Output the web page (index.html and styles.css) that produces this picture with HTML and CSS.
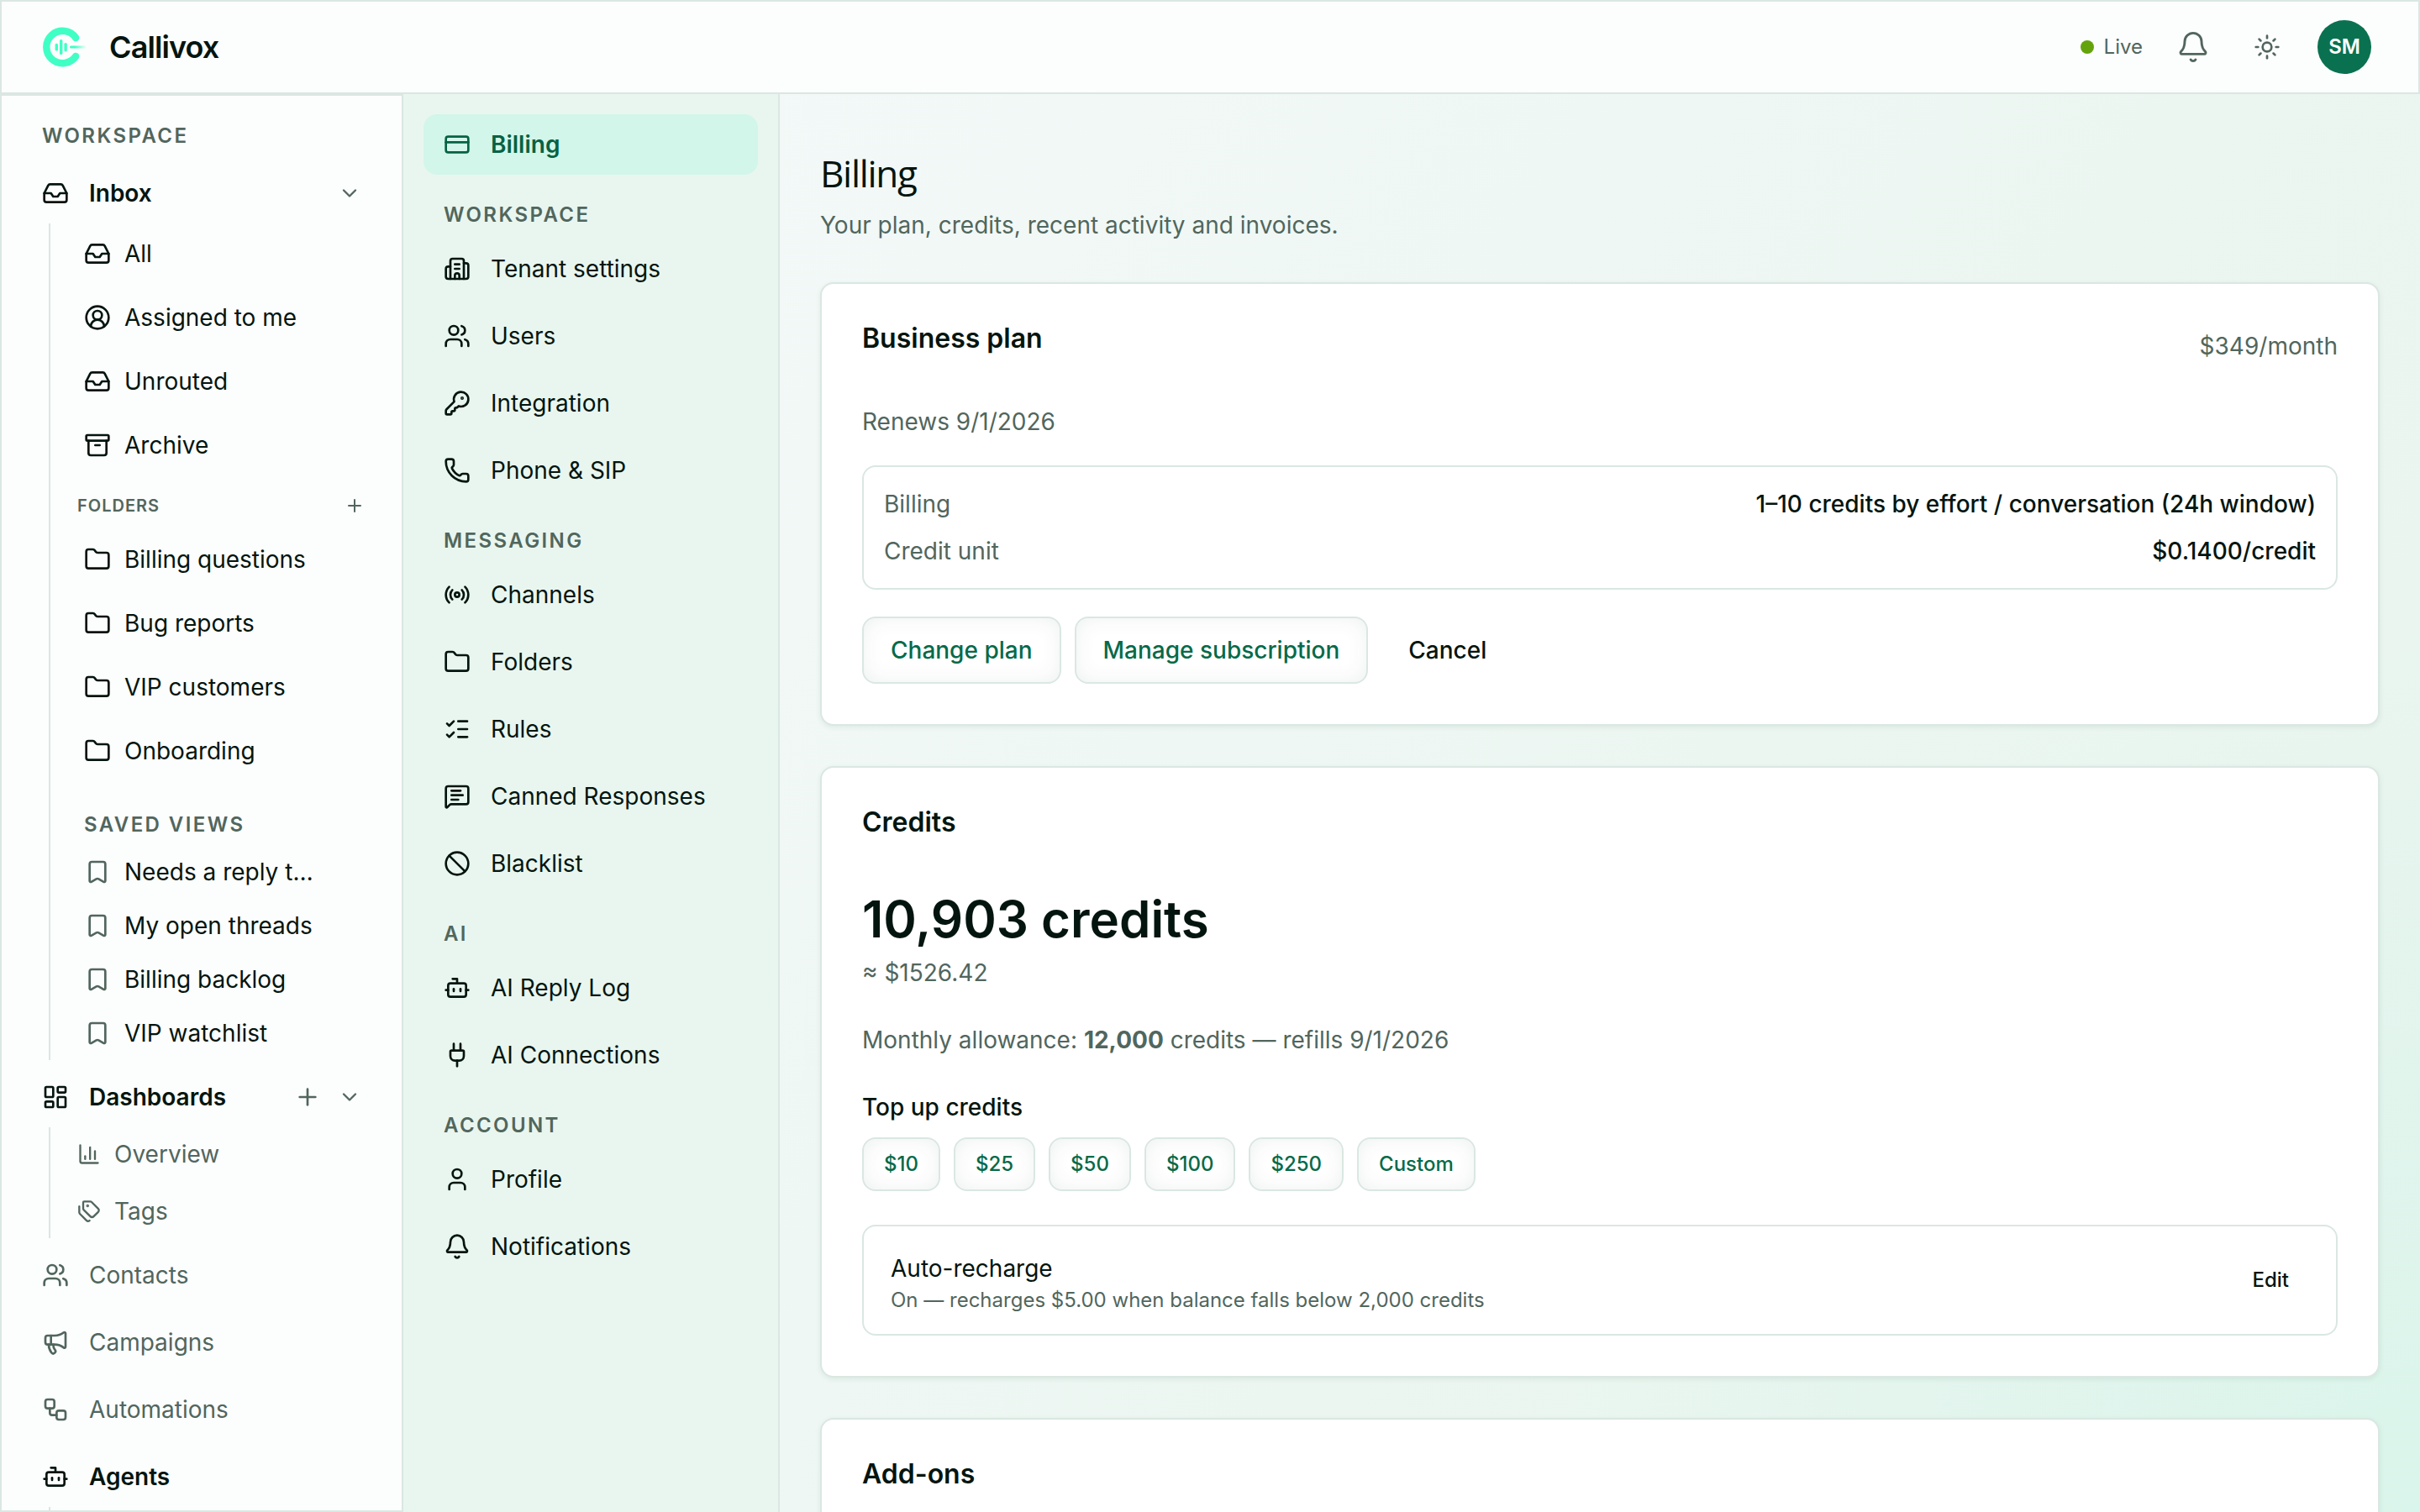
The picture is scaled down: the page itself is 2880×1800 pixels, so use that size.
FILE: index.html
```html
<!DOCTYPE html>
<html lang="en">
	<head>
		<meta charset="UTF-8" />
		<meta name="viewport" content="width=device-width, initial-scale=1.0" />
		<title>Billing - Callivox</title>
		<link rel="stylesheet" href="styles.css">
	</head>
	<body>
		<!-- icon sprite -->
		<svg class="sprite" aria-hidden="true">
			<symbol id="inbox" viewBox="0 0 24 24"><path d="M22 12h-6l-2 3h-4l-2-3H2"/><path d="M5.45 5.11 2 12v6a2 2 0 0 0 2 2h16a2 2 0 0 0 2-2v-6l-3.45-6.89A2 2 0 0 0 16.76 4H7.24a2 2 0 0 0-1.79 1.11z"/></symbol>
			<symbol id="user-circle" viewBox="0 0 24 24"><path d="M18 20a6 6 0 0 0-12 0"/><circle cx="12" cy="10" r="4"/><circle cx="12" cy="12" r="10"/></symbol>
			<symbol id="archive" viewBox="0 0 24 24"><rect width="20" height="5" x="2" y="3" rx="1"/><path d="M4 8v11a2 2 0 0 0 2 2h12a2 2 0 0 0 2-2V8"/><path d="M10 12h4"/></symbol>
			<symbol id="folder" viewBox="0 0 24 24"><path d="M20 20a2 2 0 0 0 2-2V8a2 2 0 0 0-2-2h-7.9a2 2 0 0 1-1.69-.9L9.6 3.9A2 2 0 0 0 7.93 3H4a2 2 0 0 0-2 2v13a2 2 0 0 0 2 2Z"/></symbol>
			<symbol id="bookmark" viewBox="0 0 24 24"><path d="M17 3a2 2 0 0 1 2 2v15a1 1 0 0 1-1.496.868l-4.512-2.578a2 2 0 0 0-1.984 0l-4.512 2.578A1 1 0 0 1 5 20V5a2 2 0 0 1 2-2z"/></symbol>
			<symbol id="dashboard" viewBox="0 0 24 24"><rect width="7" height="9" x="3" y="3" rx="1"/><rect width="7" height="5" x="14" y="3" rx="1"/><rect width="7" height="9" x="14" y="12" rx="1"/><rect width="7" height="5" x="3" y="16" rx="1"/></symbol>
			<symbol id="chart" viewBox="0 0 24 24"><path d="M3 3v16a2 2 0 0 0 2 2h16"/><path d="M18 17V9"/><path d="M13 17V5"/><path d="M8 17v-3"/></symbol>
			<symbol id="tags" viewBox="0 0 24 24"><path d="M13.172 2a2 2 0 0 1 1.414.586l6.71 6.71a2.4 2.4 0 0 1 0 3.408l-4.592 4.592a2.4 2.4 0 0 1-3.408 0l-6.71-6.71A2 2 0 0 1 6 9.172V3a1 1 0 0 1 1-1z"/><path d="M2 7v6.172a2 2 0 0 0 .586 1.414l6.71 6.71a2.4 2.4 0 0 0 3.191.193"/><circle cx="10.5" cy="6.5" r=".5" fill="currentColor"/></symbol>
			<symbol id="users" viewBox="0 0 24 24"><path d="M16 21v-2a4 4 0 0 0-4-4H6a4 4 0 0 0-4 4v2"/><path d="M16 3.128a4 4 0 0 1 0 7.744"/><path d="M22 21v-2a4 4 0 0 0-3-3.87"/><circle cx="9" cy="7" r="4"/></symbol>
			<symbol id="megaphone" viewBox="0 0 24 24"><path d="M11 6a13 13 0 0 0 8.4-2.8A1 1 0 0 1 21 4v12a1 1 0 0 1-1.6.8A13 13 0 0 0 11 14H5a2 2 0 0 1-2-2V8a2 2 0 0 1 2-2z"/><path d="M6 14a12 12 0 0 0 2.4 7.2 2 2 0 0 0 3.2-2.4A8 8 0 0 1 10 14"/><path d="M8 6v8"/></symbol>
			<symbol id="workflow" viewBox="0 0 24 24"><rect width="8" height="8" x="3" y="3" rx="2"/><path d="M7 11v4a2 2 0 0 0 2 2h4"/><rect width="8" height="8" x="13" y="13" rx="2"/></symbol>
			<symbol id="bot" viewBox="0 0 24 24"><path d="M12 8V4H8"/><rect width="16" height="12" x="4" y="8" rx="2"/><path d="M2 14h2"/><path d="M20 14h2"/><path d="M15 13v2"/><path d="M9 13v2"/></symbol>
			<symbol id="card" viewBox="0 0 24 24"><rect width="20" height="14" x="2" y="5" rx="2"/><path d="M2 10h20"/></symbol>
			<symbol id="building" viewBox="0 0 24 24"><path d="M10 12h4"/><path d="M10 8h4"/><path d="M14 21v-3a2 2 0 0 0-4 0v3"/><path d="M6 10H4a2 2 0 0 0-2 2v7a2 2 0 0 0 2 2h16a2 2 0 0 0 2-2V9a2 2 0 0 0-2-2h-2"/><path d="M6 21V5a2 2 0 0 1 2-2h8a2 2 0 0 1 2 2v16"/></symbol>
			<symbol id="key" viewBox="0 0 24 24"><path d="M2.586 17.414A2 2 0 0 0 2 18.828V21a1 1 0 0 0 1 1h3a1 1 0 0 0 1-1v-1a1 1 0 0 1 1-1h1a1 1 0 0 0 1-1v-1a1 1 0 0 1 1-1h.172a2 2 0 0 0 1.414-.586l.814-.814a6.5 6.5 0 1 0-4-4z"/><circle cx="16.5" cy="7.5" r=".5" fill="currentColor"/></symbol>
			<symbol id="phone" viewBox="0 0 24 24"><path d="M13.832 16.568a1 1 0 0 0 1.213-.303l.355-.465A2 2 0 0 1 17 15h3a2 2 0 0 1 2 2v3a2 2 0 0 1-2 2A18 18 0 0 1 2 4a2 2 0 0 1 2-2h3a2 2 0 0 1 2 2v3a2 2 0 0 1-.8 1.6l-.468.351a1 1 0 0 0-.292 1.233 14 14 0 0 0 6.392 6.384"/></symbol>
			<symbol id="radio" viewBox="0 0 24 24"><path d="M16.247 7.761a6 6 0 0 1 0 8.478"/><path d="M19.075 4.933a10 10 0 0 1 0 14.134"/><path d="M4.925 19.067a10 10 0 0 1 0-14.134"/><path d="M7.753 16.239a6 6 0 0 1 0-8.478"/><circle cx="12" cy="12" r="2"/></symbol>
			<symbol id="checks" viewBox="0 0 24 24"><path d="M13 5h8"/><path d="M13 12h8"/><path d="M13 19h8"/><path d="m3 17 2 2 4-4"/><path d="m3 7 2 2 4-4"/></symbol>
			<symbol id="message" viewBox="0 0 24 24"><path d="M22 17a2 2 0 0 1-2 2H6.828a2 2 0 0 0-1.414.586l-2.202 2.202A.71.71 0 0 1 2 21.286V5a2 2 0 0 1 2-2h16a2 2 0 0 1 2 2z"/><path d="M7 11h10"/><path d="M7 15h6"/><path d="M7 7h8"/></symbol>
			<symbol id="ban" viewBox="0 0 24 24"><circle cx="12" cy="12" r="10"/><path d="M4.929 4.929 19.07 19.071"/></symbol>
			<symbol id="plug" viewBox="0 0 24 24"><path d="M12 22v-5"/><path d="M15 8V2"/><path d="M17 8a1 1 0 0 1 1 1v4a4 4 0 0 1-4 4h-4a4 4 0 0 1-4-4V9a1 1 0 0 1 1-1z"/><path d="M9 8V2"/></symbol>
			<symbol id="user" viewBox="0 0 24 24"><path d="M19 21v-2a4 4 0 0 0-4-4H9a4 4 0 0 0-4 4v2"/><circle cx="12" cy="7" r="4"/></symbol>
			<symbol id="bell" viewBox="0 0 24 24"><path d="M10.268 21a2 2 0 0 0 3.464 0"/><path d="M3.262 15.326A1 1 0 0 0 4 17h16a1 1 0 0 0 .74-1.673C19.41 13.956 18 12.499 18 8A6 6 0 0 0 6 8c0 4.499-1.411 5.956-2.738 7.326"/></symbol>
			<symbol id="sun" viewBox="0 0 24 24"><circle cx="12" cy="12" r="4"/><path d="M12 2v2"/><path d="M12 20v2"/><path d="m4.93 4.93 1.41 1.41"/><path d="m17.66 17.66 1.41 1.41"/><path d="M2 12h2"/><path d="M20 12h2"/><path d="m6.34 17.66-1.41 1.41"/><path d="m19.07 4.93-1.41 1.41"/></symbol>
			<symbol id="plus" viewBox="0 0 24 24"><path d="M5 12h14"/><path d="M12 5v14"/></symbol>
			<symbol id="chevron" viewBox="0 0 24 24"><path d="m6 9 6 6 6-6"/></symbol>
		</svg>

		<header class="topbar">
			<a class="brand" href="#">
				<svg class="logo" viewBox="0 0 56 56" aria-hidden="true">
					<defs>
						<linearGradient id="trail" x1="0" x2="1" y1="0" y2="0">
							<stop offset="0.3" stop-color="#40ffc4" />
							<stop offset="1" stop-color="#40ffc4" stop-opacity="0" />
						</linearGradient>
					</defs>
					<path d="M40.2 17A19.2 19.2 0 1 0 40.2 39" fill="none" stroke="#40ffc4" stroke-width="8.4" stroke-linecap="round" />
					<rect x="15.6" y="23.8" width="3.4" height="8.8" rx="1.6" fill="#40ffc4" />
					<rect x="21" y="19" width="3.4" height="18" rx="1.6" fill="#40ffc4" />
					<rect x="26.4" y="23" width="3.4" height="10.4" rx="1.6" fill="#40ffc4" />
					<rect x="33" y="26.5" width="20" height="3" rx="1.5" fill="url(#trail)" />
				</svg>
				<span class="brand-name">Callivox</span>
			</a>
			<div class="topbar-right">
				<span class="status"><i class="dot"></i>Live</span>
				<button class="icon-btn" type="button" aria-label="Notifications"><svg class="icon icon-lg"><use href="#bell"/></svg></button>
				<button class="icon-btn" type="button" aria-label="Theme"><svg class="icon"><use href="#sun"/></svg></button>
				<button class="avatar" type="button">SM</button>
			</div>
		</header>

		<div class="layout">
			<nav class="sidebar">
				<h2 class="label">Workspace</h2>
				<div class="row row-open">
					<a href="#"><svg class="icon"><use href="#inbox"/></svg>Inbox</a>
					<button type="button" aria-label="Collapse inbox"><svg class="icon icon-md"><use href="#chevron"/></svg></button>
				</div>
				<div class="group">
					<a class="sub" href="#"><svg class="icon"><use href="#inbox"/></svg>All</a>
					<a class="sub" href="#"><svg class="icon"><use href="#user-circle"/></svg>Assigned to me</a>
					<a class="sub" href="#"><svg class="icon"><use href="#inbox"/></svg>Unrouted</a>
					<a class="sub" href="#"><svg class="icon"><use href="#archive"/></svg>Archive</a>
					<div class="folders-head">
						<h3>Folders</h3>
						<button type="button" aria-label="Add folder"><svg class="icon icon-sm"><use href="#plus"/></svg></button>
					</div>
					<a class="sub" href="#"><svg class="icon"><use href="#folder"/></svg>Billing questions</a>
					<a class="sub" href="#"><svg class="icon"><use href="#folder"/></svg>Bug reports</a>
					<a class="sub" href="#"><svg class="icon"><use href="#folder"/></svg>VIP customers</a>
					<a class="sub" href="#"><svg class="icon"><use href="#folder"/></svg>Onboarding</a>
					<div class="views">
						<h3 class="label">Saved views</h3>
						<a class="view" href="#"><svg class="icon"><use href="#bookmark"/></svg>Needs a reply t…</a>
						<a class="view" href="#"><svg class="icon"><use href="#bookmark"/></svg>My open threads</a>
						<a class="view" href="#"><svg class="icon"><use href="#bookmark"/></svg>Billing backlog</a>
						<a class="view" href="#"><svg class="icon"><use href="#bookmark"/></svg>VIP watchlist</a>
					</div>
				</div>
				<div class="row row-open row-spaced">
					<a href="#"><svg class="icon"><use href="#dashboard"/></svg>Dashboards</a>
					<button type="button" aria-label="Add dashboard"><svg class="icon"><use href="#plus"/></svg></button>
					<button type="button" aria-label="Collapse dashboards"><svg class="icon icon-md"><use href="#chevron"/></svg></button>
				</div>
				<div class="group">
					<a class="board" href="#"><svg class="icon icon-md"><use href="#chart"/></svg>Overview</a>
					<a class="board" href="#"><svg class="icon icon-md"><use href="#tags"/></svg>Tags</a>
				</div>
				<div class="row row-spaced"><a href="#"><svg class="icon"><use href="#users"/></svg>Contacts</a></div>
				<div class="row row-spaced"><a href="#"><svg class="icon"><use href="#megaphone"/></svg>Campaigns</a></div>
				<div class="row row-spaced"><a href="#"><svg class="icon"><use href="#workflow"/></svg>Automations</a></div>
				<div class="row row-open row-spaced"><a href="#"><svg class="icon"><use href="#bot"/></svg>Agents</a></div>
				<div class="group group-empty"></div>
			</nav>

			<nav class="settings">
				<a class="item active" href="#"><svg class="icon"><use href="#card"/></svg>Billing</a>
				<h2 class="label">Workspace</h2>
				<a class="item" href="#"><svg class="icon"><use href="#building"/></svg>Tenant settings</a>
				<a class="item" href="#"><svg class="icon"><use href="#users"/></svg>Users</a>
				<a class="item" href="#"><svg class="icon"><use href="#key"/></svg>Integration</a>
				<a class="item" href="#"><svg class="icon"><use href="#phone"/></svg>Phone &amp; SIP</a>
				<h2 class="label">Messaging</h2>
				<a class="item" href="#"><svg class="icon"><use href="#radio"/></svg>Channels</a>
				<a class="item" href="#"><svg class="icon"><use href="#folder"/></svg>Folders</a>
				<a class="item" href="#"><svg class="icon"><use href="#checks"/></svg>Rules</a>
				<a class="item" href="#"><svg class="icon"><use href="#message"/></svg>Canned Responses</a>
				<a class="item" href="#"><svg class="icon"><use href="#ban"/></svg>Blacklist</a>
				<h2 class="label">AI</h2>
				<a class="item" href="#"><svg class="icon"><use href="#bot"/></svg>AI Reply Log</a>
				<a class="item" href="#"><svg class="icon"><use href="#plug"/></svg>AI Connections</a>
				<h2 class="label">Account</h2>
				<a class="item" href="#"><svg class="icon"><use href="#user"/></svg>Profile</a>
				<a class="item" href="#"><svg class="icon"><use href="#bell"/></svg>Notifications</a>
			</nav>

			<main class="content">
				<div class="page-head">
					<h1>Billing</h1>
					<p>Your plan, credits, recent activity and invoices.</p>
				</div>

				<section class="card">
					<div class="card-head">
						<h2>Business plan</h2>
						<span class="price">$349/month</span>
					</div>
					<p class="muted">Renews 9/1/2026</p>
					<dl class="box facts">
						<div><dt>Billing</dt><dd>1–10 credits by effort / conversation (24h window)</dd></div>
						<div><dt>Credit unit</dt><dd>$0.1400/credit</dd></div>
					</dl>
					<div class="actions">
						<button class="btn" type="button">Change plan</button>
						<button class="btn" type="button">Manage subscription</button>
						<button class="btn btn-ghost" type="button">Cancel</button>
					</div>
				</section>

				<section class="card">
					<div class="card-head">
						<h2>Credits</h2>
					</div>
					<div class="balance">10,903 credits</div>
					<p class="muted">≈ $1526.42</p>
					<p class="muted allowance">Monthly allowance: <strong>12,000</strong> credits — refills 9/1/2026</p>
					<h3 class="topup-title">Top up credits</h3>
					<div class="actions topup">
						<button class="btn btn-sm" type="button">$10</button>
						<button class="btn btn-sm" type="button">$25</button>
						<button class="btn btn-sm" type="button">$50</button>
						<button class="btn btn-sm" type="button">$100</button>
						<button class="btn btn-sm" type="button">$250</button>
						<button class="btn btn-sm" type="button">Custom</button>
					</div>
					<div class="box recharge">
						<div>
							<p class="recharge-title">Auto-recharge</p>
							<p class="hint">On — recharges $5.00 when balance falls below 2,000 credits</p>
						</div>
						<button class="btn btn-sm btn-ghost" type="button">Edit</button>
					</div>
				</section>

				<section class="card">
					<div class="card-head">
						<h2>Add-ons</h2>
					</div>
				</section>
			</main>
		</div>
	</body>
</html>
```

FILE: styles.css
```css
:root {
	--ink: #04150f;
	--muted: #51665d;
	--line: #dae7e2;
	--surface: #fcfdfd;
	--green: #066a49;
}

* {
	box-sizing: border-box;
	margin: 0;
	padding: 0;
}

body {
	display: flex;
	flex-direction: column;
	height: 100vh;
	overflow: hidden;
	font-family: Inter, sans-serif;
	font-size: 28px;
	line-height: 40px;
	color: var(--ink);
	background: radial-gradient(circle at 100% 100%, #daf5eb 0%, rgba(218, 245, 235, 0) 32%),
		linear-gradient(125deg, #f5f9f9 10%, #f1f8f6 35%, #ecf6f1 65%, #e9f4ee 100%);
}

a {
	color: inherit;
	text-decoration: none;
}

button {
	font: inherit;
	color: inherit;
	background: none;
	border: none;
	cursor: pointer;
}

.sprite {
	display: none;
}

.icon {
	flex: none;
	display: block;
	width: 32px;
	height: 32px;
	fill: none;
	stroke: currentColor;
	stroke-width: 2;
	stroke-linecap: round;
	stroke-linejoin: round;
}
.icon-sm {
	width: 24px;
	height: 24px;
}
.icon-md {
	width: 28px;
	height: 28px;
}
.icon-lg {
	width: 40px;
	height: 40px;
	stroke-width: 1.75;
}

.label {
	font-size: 24px;
	font-weight: 600;
	line-height: 32px;
	letter-spacing: 0.1em;
	text-transform: uppercase;
	color: var(--muted);
}

/* top bar */
.topbar {
	flex: none;
	display: flex;
	align-items: center;
	justify-content: space-between;
	height: 112px;
	padding: 0 56px 0 48px;
	background: var(--surface);
	border: 2px solid var(--line);
}
.brand {
	display: flex;
	align-items: center;
	gap: 24px;
}
.logo {
	width: 56px;
	height: 56px;
}
.brand-name {
	font-size: 36px;
	font-weight: 600;
	letter-spacing: -0.025em;
}
.topbar-right {
	display: flex;
	align-items: center;
	gap: 16px;
	color: var(--muted);
}
.status {
	display: flex;
	align-items: center;
	gap: 12px;
	margin-right: 8px;
	font-size: 24px;
}
.dot {
	width: 16px;
	height: 16px;
	border-radius: 50%;
	background: #65a30d;
}
.icon-btn {
	display: flex;
	align-items: center;
	justify-content: center;
	width: 72px;
	height: 72px;
}
.avatar {
	width: 64px;
	height: 64px;
	margin-left: 8px;
	border-radius: 50%;
	background: #0a7150;
	color: #fff;
	font-size: 24px;
	font-weight: 600;
}

.layout {
	flex: 1;
	display: flex;
	min-height: 0;
}

/* main navigation */
.sidebar {
	flex: none;
	width: 480px;
	padding: 24px;
	overflow: hidden;
	background: var(--surface);
	border: 2px solid var(--line);
}
.sidebar > .label {
	padding: 8px 24px 16px;
}
.row {
	display: flex;
	align-items: center;
	gap: 20px;
	height: 72px;
	padding: 0 24px;
	color: var(--muted);
}
.row-spaced {
	margin-top: 8px;
}
.row a {
	flex: 1;
	display: flex;
	align-items: center;
	gap: 24px;
}
.row-open a {
	font-weight: 600;
	color: var(--ink);
}
.group {
	display: flex;
	flex-direction: column;
	gap: 4px;
	margin-left: 32px;
	padding-left: 16px;
	border-left: 2px solid var(--line);
}
.group-empty {
	height: 64px;
}
.sub,
.view,
.board {
	display: flex;
	align-items: center;
	gap: 16px;
	height: 72px;
	padding: 0 24px;
}
.view,
.board {
	height: 64px;
}
.view .icon {
	color: var(--muted);
}
.board {
	padding: 0 16px;
	color: var(--muted);
}
.folders-head {
	display: flex;
	align-items: center;
	justify-content: space-between;
	height: 56px;
	padding: 8px 20px 0 16px;
	color: var(--muted);
}
.folders-head h3 {
	font-size: 20px;
	font-weight: 600;
	letter-spacing: 0.05em;
	text-transform: uppercase;
}
.views .label {
	padding: 32px 24px 8px;
}

/* settings navigation */
.settings {
	flex: none;
	display: flex;
	flex-direction: column;
	gap: 8px;
	width: 448px;
	padding: 24px;
	background: #e9f6ef;
	border-right: 2px solid var(--line);
}
.settings .label {
	padding: 24px 24px 4px;
}
.item {
	display: flex;
	align-items: center;
	gap: 24px;
	height: 72px;
	padding: 0 24px;
	border-radius: 16px;
}
.item.active {
	background: #d2f6e9;
	color: #056243;
	font-weight: 600;
}

/* page */
.content {
	flex: 1;
	display: flex;
	flex-direction: column;
	gap: 48px;
	min-width: 0;
	padding: 64px 48px;
	overflow: hidden;
}
.page-head h1 {
	margin-bottom: 12px;
	font-family: "Open Sans", sans-serif;
	font-size: 44px;
	font-weight: 500;
	line-height: 60px;
	letter-spacing: -0.03em;
}
.page-head p,
.muted {
	color: var(--muted);
}

.card {
	flex: none;
	padding: 48px;
	background: #fff;
	border: 2px solid var(--line);
	border-radius: 16px;
	box-shadow: 0 2px 6px rgba(4, 60, 40, 0.08);
}
.card-head {
	display: flex;
	align-items: flex-start;
	justify-content: space-between;
	min-height: 52px;
	margin-bottom: 44px;
}
.card-head h2 {
	font-size: 32px;
	font-weight: 600;
	line-height: 34px;
}
.price {
	line-height: 52px;
	color: var(--muted);
}

.box {
	border: 2px solid var(--line);
	border-radius: 16px;
}
.facts {
	display: flex;
	flex-direction: column;
	gap: 16px;
	margin: 32px 0;
	padding: 24px;
}
.facts div {
	display: flex;
	justify-content: space-between;
}
.facts dt {
	color: var(--muted);
}
.facts dd {
	font-weight: 500;
}

.actions {
	display: flex;
	gap: 16px;
}
.btn {
	height: 80px;
	padding: 0 32px;
	border: 2px solid var(--line);
	border-radius: 16px;
	background: #fff;
	box-shadow: inset 0 0 24px rgba(6, 70, 48, 0.07);
	color: var(--green);
	font-weight: 500;
}
.btn-sm {
	height: 64px;
	padding: 0 24px;
	font-size: 24px;
}
.btn-ghost {
	border: none;
	background: none;
	box-shadow: none;
	color: var(--ink);
}

.balance {
	margin-bottom: 8px;
	font-size: 60px;
	font-weight: 600;
	line-height: 72px;
}
.allowance {
	margin: 40px 0;
}
.topup-title {
	font-size: 28px;
	font-weight: 500;
}
.topup {
	margin: 16px 0 40px;
}
.recharge {
	display: flex;
	align-items: flex-start;
	justify-content: space-between;
	padding: 32px 32px 24px;
}
.recharge-title {
	margin-bottom: 4px;
	line-height: 36px;
}
.hint {
	font-size: 24px;
	line-height: 32px;
	color: var(--muted);
}
```
